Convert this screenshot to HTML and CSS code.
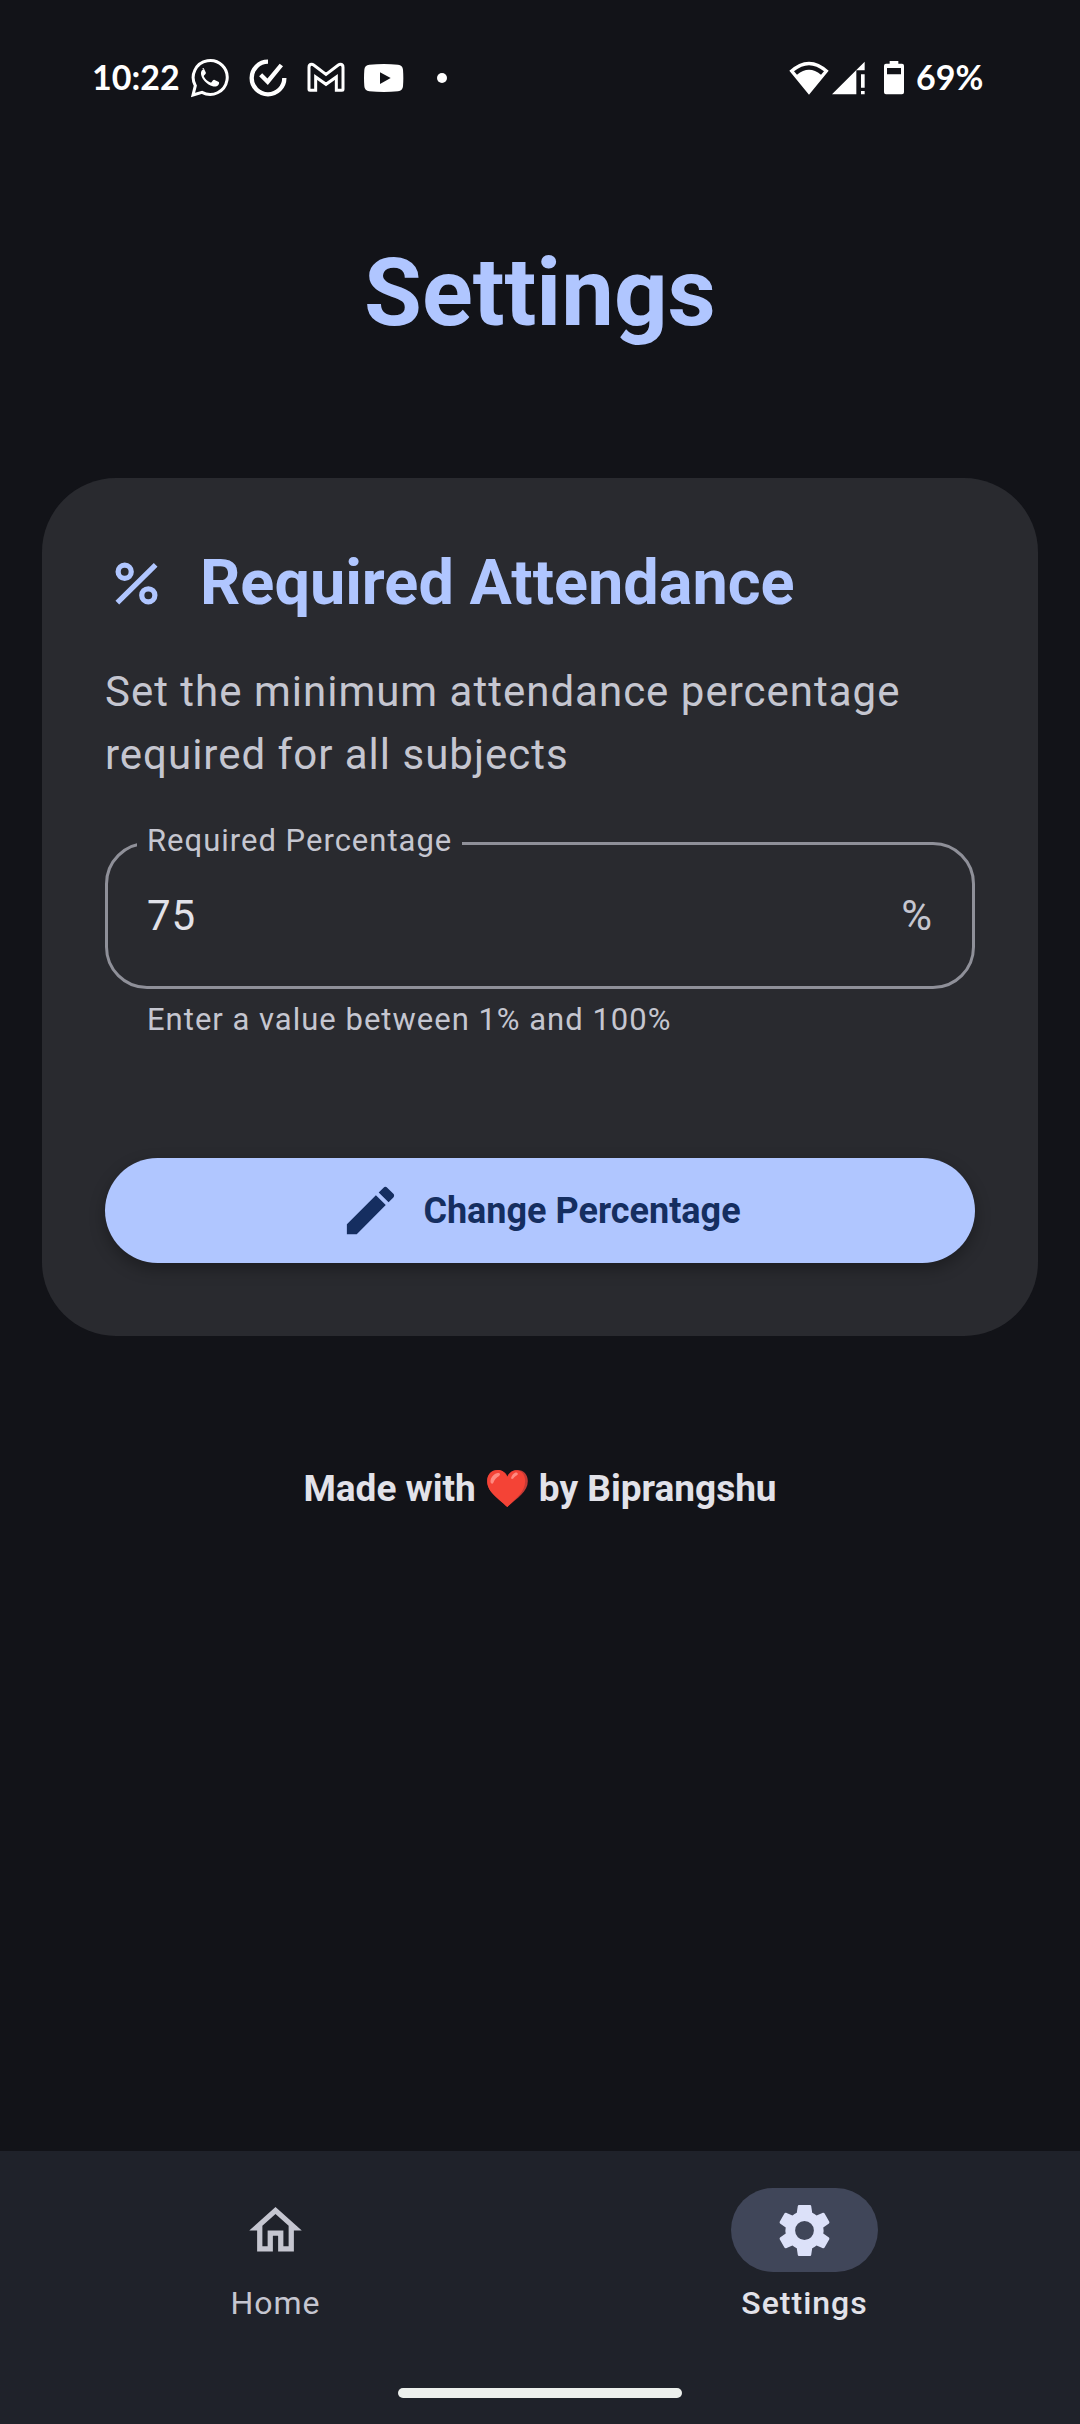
FILE: index.html
```html
<!DOCTYPE html>
<html lang="en">
<head>
  <meta charset="utf-8">
  <meta name="viewport" content="width=device-width, initial-scale=1">
  <title>Settings</title>
  <link rel="stylesheet" href="styles.css">
</head>
<body class="screen">
  <header class="status-bar">
    <div class="status-group">
      <span class="status-text">10:22</span>
      <div class="notifications">
        <svg class="notification-icon" viewBox="0 0 120 120" aria-label="WhatsApp"><path class="line line-thin" d="M9 111l7-28a51 51 0 1 1 20 20z"/><path d="M41 34c-5 1-9 7-8 14 2 16 18 32 35 37 8 2 17-1 19-8 1-4 0-5-2-6l-11-5c-2-1-3-1-5 1l-4 5c-1 2-3 2-5 1-8-4-14-9-18-17-1-2 0-3 1-4l4-5c1-2 1-3 0-4l-5-11c-1-2-2-2-6-2z"/></svg>
        <svg class="notification-icon" viewBox="0 0 120 120" aria-label="Tasks"><path class="line line-thick" d="M60 11A49 49 0 1 0 109 60M38 50L59 71 100 21"/></svg>
        <svg class="notification-icon" viewBox="0 0 120 120" aria-label="Gmail"><path class="line line-thin" d="M12 97h17V57L60 79 91 57v40h17q3 0 3-3V28q0-9-8-9-3 0-6 2L60 49 23 21q-3-2-6-2-8 0-8 9v66q0 3 3 3z"/></svg>
        <svg class="notification-icon" viewBox="0 0 120 120" aria-label="YouTube"><path fill-rule="evenodd" d="M16 20Q60 16 102 20q14 1 15 15 2 25 0 50-1 14-15 15-42 4-86 0Q2 99 1 85q-2-25 0-50Q2 21 16 20zM48 43v35l32-18z"/></svg>
        <svg class="notification-icon" viewBox="0 0 120 120" aria-label="More"><circle cx="60" cy="60" r="15"/></svg>
      </div>
    </div>
    <div class="status-group">
      <div class="connectivity">
        <svg class="wifi-icon" viewBox="0 0 120 102" aria-label="Wi-Fi"><path fill-rule="evenodd" d="M1 29Q60-25 119 29L60 101zM15 31L24 41Q60 12 96 41L105 31Q60-5 15 31z"/></svg>
        <svg class="signal-icon" viewBox="0 0 99 102" aria-label="Mobile signal"><path d="M0 100L73 27V100zM73 27L98 2V28H73zM87 40h11v40H87zM87 90h11v10H87z"/></svg>
      </div>
      <div class="battery">
        <svg class="battery-icon" viewBox="0 0 60 102" aria-hidden="true"><path fill-rule="evenodd" d="M17 0h26v8h11q6 0 6 6v80q0 6-6 6H6q-6 0-6-6V14q0-6 6-6h11zM9 21v19h42V21z"/></svg>
        <span class="status-text">69%</span>
      </div>
    </div>
  </header>

  <main class="content">
    <h1 class="page-title">Settings</h1>

    <form class="card">
      <div class="card-heading">
        <svg class="icon" viewBox="0 0 24 24" aria-hidden="true"><path fill-rule="evenodd" d="M7.500 4a3.500 3.500 0 1 0 0 7 3.500 3.500 0 0 0 0-7zm0 5a1.500 1.500 0 1 1 0-3 1.500 1.500 0 0 1 0 3zM16.500 13a3.500 3.500 0 1 0 0 7 3.500 3.500 0 0 0 0-7zm0 5a1.500 1.500 0 1 1 0-3 1.500 1.500 0 0 1 0 3zM5.410 20L4 18.590 18.590 4.180 20 5.590z"/></svg>
        <h2 class="card-title">Required Attendance</h2>
      </div>
      <p class="card-text">Set the minimum attendance percentage required for all subjects</p>
      <fieldset class="field">
        <legend class="field-legend"><label for="percentage">Required Percentage</label></legend>
        <div class="field-row">
          <input class="field-input" id="percentage" type="text" inputmode="numeric" value="75" aria-describedby="percentage-help">
          <span class="field-suffix">%</span>
        </div>
      </fieldset>
      <p class="field-help" id="percentage-help">Enter a value between 1% and 100%</p>
      <button class="primary-button" type="button">
        <svg class="icon" viewBox="0 0 24 24" aria-hidden="true"><path d="M3 17.250V21h3.750L17.810 9.940l-3.750-3.750L3 17.250zM20.710 7.040c.39-.39.39-1.020 0-1.410l-2.340-2.340c-.39-.39-1.020-.39-1.410 0l-1.830 1.830 3.750 3.750 1.830-1.830z"/></svg>
        Change Percentage
      </button>
    </form>

    <p class="credit">Made with
      <svg class="heart" viewBox="0 0 123 112" role="img" aria-label="love"><path fill="#c33a35" d="M92 0c-14 0-25 7-31 19C56 7 45 0 32 0 13 0 0 14 0 33c0 34 33 51 61 79 29-28 62-45 62-79 0-19-13-33-31-33z"/><path fill="#f44336" d="M87 1C76 2 66 9 61 22 56 8 45 0 32 0 13 0 0 14 0 33c0 34 33 51 61 79 26-28 54-45 54-79 0-18-11-32-28-32z"/><path fill="#ff8a80" d="M29 10c9-4 13 3 7 8-8 5-14 11-17 20-2 6-9 4-9-3 0-11 8-21 19-25zM83 9c8-4 13 3 7 7-5 3-8 6-11 10-4 3-8 1-6-4 2-6 5-10 10-13z"/></svg>
      by Biprangshu</p>
  </main>

  <footer class="bottom-bar">
    <nav class="tabs">
      <a class="tab" href="#home">
        <span class="tab-pill"><svg class="icon" viewBox="0 0 24 24" aria-hidden="true"><path d="M12 5.690l5 4.500V18h-2v-6H9v6H7v-7.810l5-4.500M12 3L2 12h3v8h6v-6h2v6h6v-8h3L12 3z"/></svg></span>
        Home
      </a>
      <a class="tab tab-active" href="#settings" aria-current="page">
        <span class="tab-pill"><svg class="icon" viewBox="-94 -94 188 188" aria-hidden="true"><path fill-rule="evenodd" d="M-17-76H17Q19-76 20-73L23-53Q30-50 36-45L55-53Q58-54 60-51L74-26Q75-23 73-21L56-9Q58 0 56 9L73 21Q75 23 74 26L60 51Q58 54 55 53L36 45Q30 50 23 53L20 73Q19 76 17 76H-17Q-19 76-20 73L-23 53Q-30 50-36 45L-55 53Q-58 54-60 51L-74 26Q-75 23-73 21L-56 9Q-58 0-56-9L-73-21Q-75-23-74-26L-60-51Q-58-54-55-53L-36-45Q-30-50-23-53L-20-73Q-19-76-17-76zM0-28A28 28 0 1 0 0 28 28 28 0 0 0 0-28z"/></svg></span>
        Settings
      </a>
    </nav>
    <div class="home-indicator"></div>
  </footer>
</body>
</html>
```
FILE: styles.css
```css
* {
  box-sizing: border-box;
  margin: 0;
}

svg {
  display: block;
  flex: none;
  fill: currentColor;
}

.screen {
  display: flex;
  flex-direction: column;
  min-height: 100vh;
  background: #121318;
  color: #e2e2e9;
  font-family: Roboto, "Liberation Sans", sans-serif;
}

/* Status bar */

.status-bar {
  display: flex;
  align-items: center;
  justify-content: space-between;
  height: 156px;
  padding: 0 92px;
  color: #fff;
}

.status-group,
.notifications,
.connectivity,
.battery {
  display: flex;
  align-items: center;
}

.status-group {
  gap: 10px;
}

.notifications {
  gap: 18px;
}

.connectivity {
  gap: 3px;
  margin-right: 9px;
}

.battery {
  gap: 12px;
}

.status-text {
  min-width: 72px;
  padding-bottom: 2px;
  font-family: Lato, "Liberation Sans", sans-serif;
  font-size: 34px;
  font-weight: 700;
  line-height: 40px;
}

.notification-icon {
  width: 40px;
  height: 40px;
}

.wifi-icon {
  width: 40px;
  height: 34px;
}

.signal-icon {
  width: 33px;
  height: 34px;
}

.battery-icon {
  width: 20px;
  height: 34px;
}

.line {
  fill: none;
  stroke: currentColor;
}

.line-thin {
  stroke-width: 9;
}

.line-thick {
  stroke-width: 13;
}

/* Page */

.content {
  flex: 1;
  padding: 79px 42px 42px;
}

.page-title {
  margin-bottom: 127px;
  color: #b0c6ff;
  font-size: 94px;
  font-weight: 700;
  line-height: 116px;
  text-align: center;
}

.icon {
  width: 63px;
  height: 63px;
}

.card {
  padding: 63px 63px 73px;
  border-radius: 74px;
  background: #292a2f;
}

.card-heading {
  display: flex;
  align-items: center;
  gap: 32px;
  margin-bottom: 35px;
  color: #b0c6ff;
}

.card-title {
  font-size: 63px;
  font-weight: 700;
  line-height: 84px;
}

.card-text {
  margin-bottom: 34px;
  color: #c5c6d0;
  font-size: 42px;
  letter-spacing: 1px;
  line-height: 63px;
}

.field {
  min-width: 0;
  padding: 18px 29px 39px;
  border: 3px solid #8f9099;
  border-radius: 42px;
}

.field-legend {
  padding: 0 10px 4px;
  color: #c5c6d0;
  font-size: 31px;
  letter-spacing: 1px;
  line-height: 42px;
}

.field-row {
  display: flex;
  padding: 0 10px;
  font-size: 42px;
  letter-spacing: 1px;
  line-height: 63px;
}

.field-input {
  flex: 1;
  min-width: 0;
  height: 63px;
  padding: 0;
  border: 0;
  outline: 0;
  background: none;
  color: #e2e2e9;
  font: inherit;
  letter-spacing: inherit;
}

.field-suffix {
  color: #c5c6d0;
}

.field-help {
  padding: 10px 42px 0;
  color: #c5c6d0;
  font-size: 31px;
  letter-spacing: 1px;
  line-height: 42px;
}

.primary-button {
  display: flex;
  align-items: center;
  justify-content: center;
  gap: 21px;
  width: 100%;
  height: 105px;
  margin-top: 117px;
  padding: 0 42px;
  border: 0;
  border-radius: 53px;
  background: #b0c6ff;
  box-shadow: 0 6px 16px rgba(0, 0, 0, 0.3);
  color: #152e60;
  font-family: inherit;
  font-size: 36px;
  font-weight: 700;
}

.credit {
  display: flex;
  align-items: center;
  justify-content: center;
  gap: 11px;
  margin-top: 126px;
  font-size: 37px;
  font-weight: 700;
  line-height: 53px;
}

.heart {
  width: 41px;
  height: 37px;
}

/* Bottom navigation */

.bottom-bar {
  padding: 37px 11px 26px;
  background: #1f222a;
}

.tabs {
  display: flex;
}

.tab {
  display: flex;
  flex: 1;
  flex-direction: column;
  align-items: center;
  gap: 10px;
  color: #c5c6d0;
  font-size: 32px;
  letter-spacing: 1px;
  line-height: 42px;
  text-decoration: none;
}

.tab-active {
  color: #e2e2e9;
  font-weight: 500;
}

.tab-pill {
  display: flex;
  align-items: center;
  justify-content: center;
  width: 147px;
  height: 84px;
  border-radius: 42px;
}

.tab-active .tab-pill {
  background: #404659;
  color: #dce1f9;
}

.home-indicator {
  width: 284px;
  height: 10px;
  margin: 64px auto 0;
  border-radius: 5px;
  background: #edf0ed;
}
```
